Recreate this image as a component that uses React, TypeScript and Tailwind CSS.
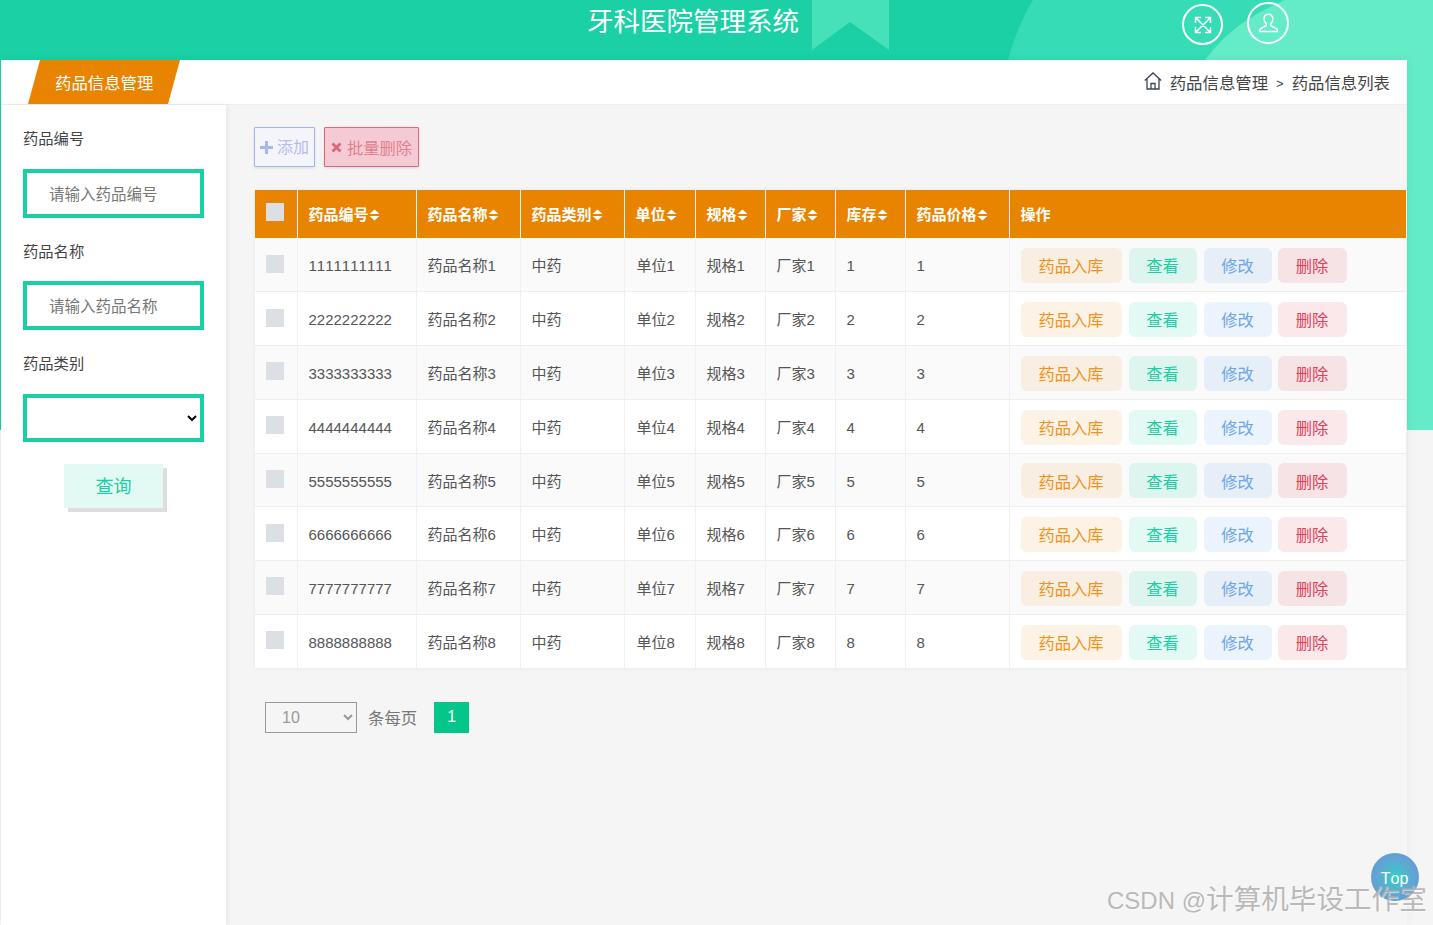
const rows = [1, 2, 3, 4, 5, 6, 7, 8]
const columns = ['药品编号', '药品名称', '药品类别', '单位', '规格', '厂家', '库存', '药品价格']

function SortIcon() {
  return (
    <svg width="11" height="12" viewBox="0 0 11 12" className="inline-block align-[-1px]">
      <path d="M5.5 0.5 L10.5 5 H0.5 Z M0.5 7 H10.5 L5.5 11.5 Z" fill="#fff" />
    </svg>
  )
}

function HeaderBackground() {
  return (
    <div className="absolute top-0 left-0 w-full h-[430px] bg-[#1ad0a4]">
      <svg width="1433" height="430" viewBox="0 0 1433 430" className="block">
        <path d="M1008 60 C 1014 38 1022 18 1033 0 H1433 V60 Z" fill="#35dcb5" />
        <path d="M1205 60 C 1222 38 1240 20 1285 0 H1433 V60 Z" fill="#64ebc8" />
        <path d="M812 0 H889 V50 L850 22 L812 50 Z" fill="#46e0b9" />
        <rect x="1407" y="60" width="26" height="370" fill="#64ebc8" />
      </svg>
    </div>
  )
}

function Field({ label, placeholder, lift }: { label: string; placeholder: string; lift?: boolean }) {
  return (
    <div>
      <div className={lift ? 'h-[21px] leading-[19px] text-[15.3px] text-[#444]' : 'h-[21px] leading-[21px] text-[15.3px] text-[#444]'}>{label}</div>
      <input
        placeholder={placeholder}
        className="mt-[19px] block w-[181px] h-[49px] border-4 border-[#1acfa3] bg-white pl-[22px] pt-[2px] text-[15.500px] text-[#333] outline-none placeholder:text-[#777]"
      />
    </div>
  )
}

export default function App() {
  return (
    <div
      className="relative h-[925px] overflow-hidden bg-[#f5f5f5] [font-kerning:none]"
      style={{ fontFamily: '"Liberation Sans", "Noto Sans CJK SC", sans-serif' }}
    >
      <HeaderBackground />

      {/* Header */}
      <div className="relative h-[60px] flex">
        <div className="absolute left-[587px] top-[5px] text-[26.5px] leading-[35px] text-white whitespace-nowrap">
          牙科医院管理系统
        </div>
        <div className="ml-[1182px] mt-[4px] w-[41px] h-[41px] rounded-full border-2 border-white flex items-center justify-center">
          <svg width="18" height="18" viewBox="0 0 18 18" fill="none" stroke="#fff" strokeWidth="1.500">
            <path d="M2 2 L16 16 M16 2 L2 16 M1.500 7 V1.500 H7 M11 1.500 H16.500 V7 M1.500 11 V16.500 H7 M11 16.500 H16.500 V11" />
          </svg>
        </div>
        <div className="ml-[24px] mt-[2px] w-[42px] h-[42px] rounded-full border-2 border-white flex items-center justify-center">
          <svg width="23" height="22" viewBox="0 0 24 24" fill="none" stroke="#fff" strokeWidth="1.600">
            <path d="M12 2.500c-3 0-4.800 2.300-4.800 5.200 0 2.200 1 4 2.300 5.200.4.900.2 1.900-.7 2.400L3.500 18c-.9.500-1.200 1.400-1.200 3.200h19.400c0-1.800-.3-2.700-1.200-3.200l-5.300-2.700c-.9-.5-1.100-1.500-.7-2.400 1.300-1.200 2.300-3 2.300-5.200 0-2.900-1.800-5.200-4.800-5.200z" />
          </svg>
        </div>
      </div>

      {/* Panel */}
      <div className="relative ml-[1px] w-[1406px] h-[865px] bg-[#f5f5f5] shadow-[0_0_10px_rgba(0,0,0,0.05)]">
        <div className="h-[45px] bg-white border-b border-[#eeeeee] flex items-center justify-between">
          <div className="ml-[27px] w-[152px] h-[44px] self-start bg-[#e98400] [clip-path:polygon(12px_0,100%_0,140px_100%,0_100%)] text-white text-[16.4px] leading-[47px] pl-[27px]">
            药品信息管理
          </div>
          <div className="flex items-center mr-[17px] pt-[3px] text-[16.4px] text-[#444]">
            <svg width="18" height="18" viewBox="0 0 18 18" fill="none" stroke="#3a4456" strokeWidth="1.300" className="mr-[8px] -mt-[5px]">
              <path d="M0.800 8.500 L9 1 L17.200 8.500 M3 7 V17 H15 V7 M7 17 V11.500 H11 V17" />
            </svg>
            <span>药品信息管理</span>
            <span className="mx-[8px] text-[13px]">&gt;</span>
            <span>药品信息列表</span>
          </div>
        </div>

        <div className="flex h-[820px]">
          {/* Sidebar */}
          <div className="w-[225px] bg-white pl-[22px] pt-[24px] shadow-[2px_0_6px_rgba(0,0,0,0.06)]">
            <div className="flex flex-col gap-[23px]">
              <Field label="药品编号" placeholder="请输入药品编号" lift />
              <Field label="药品名称" placeholder="请输入药品名称" />
              <div>
                <div className="h-[21px] leading-[21px] text-[15.3px] text-[#444]">药品类别</div>
                <select className="mt-[20px] block w-[181px] h-[48px] border-4 border-[#1acfa3] bg-white text-[15px] outline-none"></select>
              </div>
            </div>
            <button className="block ml-[41px] mt-[22px] w-[99px] h-[44px] bg-[#e3f9f3] text-[#1acfa3] text-[18px] pt-[2px] shadow-[4px_4px_0_#dddddd]">
              查询
            </button>
          </div>

          {/* Content */}
          <div className="flex-1 pl-[29px] pt-[22px]">
            <div className="-ml-[1px] flex gap-[9px] h-[40px]">
              <button className="w-[61px] h-[40px] border border-[#a3b3ee] bg-[#f4f4fb] rounded-[1px] shadow-[0_1px_3px_rgba(0,0,0,0.1)] flex items-center justify-center gap-[4px] text-[16px] text-[#b4bdee]">
                <svg width="13" height="13" viewBox="0 0 13 13"><path d="M5 0h3v5h5v3H8v5H5V8H0V5h5z" fill="#a9b7ee" /></svg>
                <span className="pt-[2px]">添加</span>
              </button>
              <button className="w-[95px] h-[40px] border border-[#e0667a] bg-[#f4cbd4] rounded-[1px] shadow-[0_1px_3px_rgba(0,0,0,0.1)] flex items-center justify-center gap-[5px] text-[16.3px] text-[#e2808f]">
                <svg width="11" height="11" viewBox="0 0 11 11"><path d="M1.500 1.500 L9.500 9.500 M9.500 1.500 L1.500 9.500" stroke="#e0667a" strokeWidth="2.800" /></svg>
                <span className="pt-[2px]">批量删除</span>
              </button>
            </div>

            <table className="mt-[23px] w-[1151px] table-fixed border-collapse bg-white shadow-[0_0_4px_rgba(0,0,0,0.06)] text-[15px] text-[#555]">
              <colgroup>
                <col className="w-[42px]" />
                <col className="w-[119px]" />
                <col className="w-[104px]" />
                <col className="w-[104px]" />
                <col className="w-[71px]" />
                <col className="w-[70px]" />
                <col className="w-[70px]" />
                <col className="w-[70px]" />
                <col className="w-[104px]" />
                <col />
              </colgroup>
              <thead>
                <tr className="h-[48px] bg-[#e98400] text-white">
                  <th className="border-r border-[#f5f5f5] pl-[11px] text-left">
                    <div className="w-[18px] h-[18px] bg-[#dcdfe4] -mt-[4px]"></div>
                  </th>
                  {columns.map((c) => (
                    <th key={c} className="border-r border-[#f5f5f5] pl-[11px] pt-[2px] text-left font-bold whitespace-nowrap">
                      {c}
                      <SortIcon />
                    </th>
                  ))}
                  <th className="pl-[11px] pt-[2px] text-left font-bold">操作</th>
                </tr>
              </thead>
              <tbody>
                {rows.map((n) => {
                  const code = String(n).repeat(10)
                  return (
                    <tr key={n} className="h-[53.75px] border-b border-[#eeeeee] odd:bg-[#fafafa] even:bg-white">
                      <td className="border-r border-[#f0f0f0] pl-[11px]">
                        <div className="w-[18px] h-[18px] bg-[#dcdfe4] -mt-[2px]"></div>
                      </td>
                      <td className="border-r border-[#f0f0f0] pl-[11px] pt-[4px]">{code}</td>
                      <td className="border-r border-[#f0f0f0] pl-[11px] pt-[4px]">药品名称{n}</td>
                      <td className="border-r border-[#f0f0f0] pl-[11px] pt-[4px]">中药</td>
                      <td className="border-r border-[#f0f0f0] pl-[12px] pt-[4px]">单位{n}</td>
                      <td className="border-r border-[#f0f0f0] pl-[11px] pt-[4px]">规格{n}</td>
                      <td className="border-r border-[#f0f0f0] pl-[11px] pt-[4px]">厂家{n}</td>
                      <td className="border-r border-[#f0f0f0] pl-[11px] pt-[4px]">{n}</td>
                      <td className="border-r border-[#f0f0f0] pl-[11px] pt-[4px]">{n}</td>
                      <td className="pl-[11px] pt-[2px]">
                        <div className="flex gap-[7px] text-[16.3px]">
                          <button className="w-[101px] h-[35px] pt-[2px] rounded-[6px] bg-[#e98400]/10 text-[#f0921e]">药品入库</button>
                          <button className="w-[68px] h-[35px] pt-[2px] rounded-[6px] bg-[#1ad0a4]/12 text-[#1acfa3]">查看</button>
                          <button className="w-[68px] h-[35px] pt-[2px] rounded-[6px] bg-[#5a9be6]/12 text-[#6ea6e6]">修改</button>
                          <button className="-ml-[1px] w-[69px] h-[35px] pt-[2px] rounded-[6px] bg-[#e0405a]/12 text-[#e0405a]">删除</button>
                        </div>
                      </td>
                    </tr>
                  )
                })}
              </tbody>
            </table>

            {/* Pagination */}
            <div className="mt-[33px] ml-[10px] flex items-center">
              <select className="w-[92px] h-[31px] border border-[#999] bg-transparent pl-[12px] text-[16px] text-[#999] outline-none">
                <option>10</option>
              </select>
              <span className="ml-[11px] pt-[2px] text-[16.4px] text-[#777]">条每页</span>
              <span className="ml-[17px] w-[35px] h-[31px] bg-[#04c58a] text-white text-[16px] flex items-center justify-center">1</span>
            </div>
          </div>
        </div>
      </div>

      {/* Back to top */}
      <div
        className="absolute left-[1371px] top-[853px] w-[48px] h-[48px] rounded-full flex items-center justify-center text-white text-[16px]"
        style={{ background: 'radial-gradient(circle, #2fd0c4 0%, #5fa8d2 50%, #6a8fd8 100%)' }}
      >
        <span className="mt-[3px] mr-[1px]">Top</span>
      </div>

      {/* Watermark */}
      <div className="absolute left-[1107px] top-[882px] leading-[36px] text-[#a8a8a8]/80 whitespace-nowrap [text-shadow:1px_1px_1px_rgba(255,255,255,0.6)]">
        <span className="text-[24px]">CSDN @</span>
        <span className="text-[27.6px]">计算机毕设工作室</span>
      </div>
    </div>
  )
}
